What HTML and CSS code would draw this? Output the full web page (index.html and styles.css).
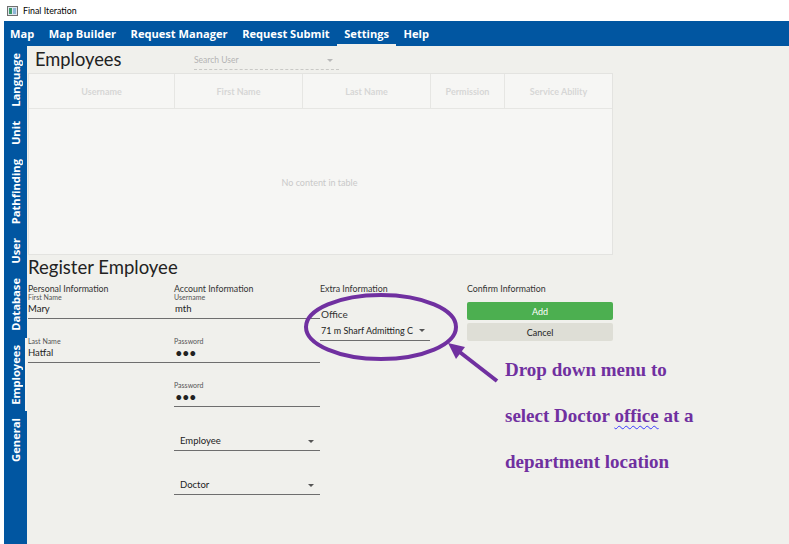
FILE: index.html
```html
<!DOCTYPE html>
<html>
<head>
<meta charset="utf-8">
<title>Final Iteration</title>
<link rel="stylesheet" href="styles.css">
</head>
<body>
<div class="window">
  <div class="titlebar">
    <svg class="appicon" width="11" height="10" viewBox="0 0 11 10">
      <rect x="0.5" y="0.5" width="10" height="9" fill="#dfe6ee" stroke="#707070"/>
      <rect x="2" y="2" width="3" height="6" fill="#3b9a6a"/>
      <rect x="6" y="2" width="3" height="6" fill="#8fb6d8"/>
    </svg>
    <span>Final Iteration</span>
  </div>
  <div class="app">
    <nav class="menubar">
      <span class="menu-item">Map</span>
      <span class="menu-item">Map Builder</span>
      <span class="menu-item">Request Manager</span>
      <span class="menu-item">Request Submit</span>
      <span class="menu-item active">Settings</span>
      <span class="menu-item">Help</span>
    </nav>
    <div class="main">
      <aside class="sidebar">
        <div class="tab"><span>Language</span></div>
        <div class="tab"><span>Unit</span></div>
        <div class="tab"><span>Pathfinding</span></div>
        <div class="tab"><span>User</span></div>
        <div class="tab"><span>Database</span></div>
        <div class="tab active"><span>Employees</span></div>
        <div class="tab"><span>General</span></div>
      </aside>
      <section class="content">
        <div class="emp-header">
          <h1 class="page-title">Employees</h1>
          <div class="search">
            <span>Search User</span>
            <span class="caret small"></span>
          </div>
        </div>
        <div class="table">
          <div class="thead">
            <div class="th">Username</div>
            <div class="th">First Name</div>
            <div class="th">Last Name</div>
            <div class="th">Permission</div>
            <div class="th">Service Ability</div>
          </div>
          <div class="tbody">No content in table</div>
        </div>
        <h2 class="section-title">Register Employee</h2>
        <div class="form">
          <div class="col">
            <div class="col-head">Personal Information</div>
            <div class="field">
              <div class="label">First Name</div>
              <div class="value">Mary</div>
            </div>
            <div class="field">
              <div class="label">Last Name</div>
              <div class="value">Hatfal</div>
            </div>
          </div>
          <div class="col">
            <div class="col-head">Account Information</div>
            <div class="field">
              <div class="label">Username</div>
              <div class="value inset1">mth</div>
            </div>
            <div class="field">
              <div class="label">Password</div>
              <div class="value inset1 dots">&#8226;&#8226;&#8226;</div>
            </div>
            <div class="field">
              <div class="label">Password</div>
              <div class="value inset1 dots">&#8226;&#8226;&#8226;</div>
            </div>
            <div class="field">
              <div class="label"></div>
              <div class="value combo"><span>Employee</span><span class="caret"></span></div>
            </div>
            <div class="field">
              <div class="label"></div>
              <div class="value combo"><span>Doctor</span><span class="caret"></span></div>
            </div>
          </div>
          <div class="col">
            <div class="col-head">Extra Information</div>
            <div class="office">
              <div class="office-label">Office</div>
              <div class="office-combo"><span class="office-text">71 m Sharf Admitting C</span><span class="caret"></span></div>
            </div>
          </div>
          <div class="col">
            <div class="col-head">Confirm Information</div>
            <div class="buttons">
              <div class="btn btn-add">Add</div>
              <div class="btn btn-cancel">Cancel</div>
            </div>
          </div>
        </div>
      </section>
    </div>
  </div>

  <svg class="annotation" width="789" height="544" viewBox="0 0 789 544">
    <ellipse cx="381" cy="327" rx="75" ry="32" fill="none" stroke="#7030a0" stroke-width="4"/>
    <line x1="497" y1="381" x2="459" y2="351.5" stroke="#7030a0" stroke-width="4"/>
    <polygon points="448,343 465,347 456,359" fill="#7030a0"/>
  </svg>
  <div class="note">
    <div>Drop down menu to</div>
    <div>select Doctor <span class="spell">office</span> at a</div>
    <div>department location</div>
  </div>
</div>
</body>
</html>
```

FILE: styles.css
```css
* { box-sizing: border-box; }
html, body { margin: 0; padding: 0; }
body {
  width: 789px;
  height: 544px;
  overflow: hidden;
  background: #ffffff;
  font-family: Lato, "Open Sans", sans-serif;
}
.window {
  position: relative;
  width: 789px;
  height: 544px;
}
.titlebar {
  height: 21px;
  display: flex;
  align-items: center;
  gap: 5px;
  padding-left: 7px;
  font-size: 8.8px;
  color: #000;
}
.appicon { display: block; }
.app {
  margin-left: 4px;
  height: 523px;
  display: flex;
  flex-direction: column;
}
.menubar {
  height: 25px;
  flex: none;
  background: #0156a1;
  display: flex;
}
.menu-item {
  display: flex;
  align-items: center;
  padding: 2px 7.3px 0;
  border-bottom: 2px solid transparent;
  color: #ffffff;
  font-family: "Open Sans", Lato, sans-serif;
  font-weight: 700;
  font-size: 11.1px;
}
.menu-item:first-child { padding-left: 6px; }
.menu-item.active { border-bottom-color: #f0f0ec; }
.main {
  flex: 1;
  display: flex;
  min-height: 0;
}
.sidebar {
  width: 23px;
  flex: none;
  background: #0156a1;
  display: flex;
  flex-direction: column;
}
.tab {
  display: flex;
  justify-content: center;
  padding: 7px 0 7px 2px;
  border-right: 2px solid transparent;
}
.tab.active { border-right-color: #f4f4f2; }
.tab span {
  writing-mode: vertical-rl;
  transform: rotate(180deg);
  color: #ffffff;
  font-family: "Open Sans", Lato, sans-serif;
  font-weight: 700;
  font-size: 11.2px;
  line-height: 13px;
}
.content {
  flex: 1;
  background: #f0f0ec;
  padding-left: 1px;
}
.emp-header {
  height: 27px;
  display: flex;
}
.page-title {
  margin: 0;
  width: 166px;
  padding-left: 7px;
  font-size: 18.3px;
  line-height: 27px;
  font-weight: 400;
  color: #222;
}
.search {
  width: 145px;
  height: 24px;
  display: flex;
  align-items: center;
  justify-content: space-between;
  padding: 5px 6px 0 0;
  border-bottom: 1px dashed #c9c9c6;
  font-size: 8.5px;
  color: #b4b4b4;
}
.caret {
  width: 0;
  height: 0;
  border-left: 3.5px solid transparent;
  border-right: 3.5px solid transparent;
  border-top: 3.5px solid #555;
}
.caret.small { border-top-color: #b8b8b8; }
.table {
  width: 585px;
  height: 182px;
  background: #f6f6f4;
  border: 1px solid #e3e3e0;
  display: flex;
  flex-direction: column;
}
.thead {
  height: 35px;
  flex: none;
  display: grid;
  grid-template-columns: 146px 128px 128px 74px 1fr;
  border-bottom: 1px solid #e6e6e3;
}
.th {
  display: flex;
  align-items: center;
  justify-content: center;
  border-right: 1px solid #e6e6e3;
  color: #d6d6d6;
  font-weight: 700;
  font-size: 9px;
}
.th:last-child { border-right: none; }
.tbody {
  flex: 1;
  display: flex;
  align-items: center;
  justify-content: center;
  padding-top: 1px;
  padding-right: 2px;
  font-size: 9px;
  color: #c9c9c9;
}
.section-title {
  margin: 0;
  height: 29px;
  font-size: 18.5px;
  line-height: 24px;
  font-weight: 400;
  color: #222;
}
.form {
  display: grid;
  grid-template-columns: 146px 146px 147px 146px;
}
.col-head {
  height: 8px;
  font-size: 8.8px;
  line-height: 10px;
  color: #333;
}
.field {
  margin-bottom: 17px;
}
.label {
  height: 8px;
  font-size: 7px;
  line-height: 8px;
  padding-top: 1px;
  color: #555;
}
.value {
  height: 19px;
  line-height: 18px;
  font-size: 9.5px;
  color: #222;
  border-bottom: 1px solid #6e6e6e;
}
.value.inset1 { padding-left: 1px; }
.value.dots {
  font-size: 13px;
  letter-spacing: -0.5px;
  color: #222;
}
.value.combo {
  display: flex;
  align-items: center;
  justify-content: space-between;
  padding: 0 6px 0 6px;
}
.office-label {
  margin-top: 16px;
  padding-left: 1px;
  font-size: 10px;
  line-height: 12px;
  color: #333;
}
.office-combo {
  width: 110px;
  height: 21px;
  display: flex;
  align-items: center;
  padding: 0 5px 0 1px;
  gap: 4px;
  border-bottom: 1px solid #6e6e6e;
  font-size: 9px;
  color: #222;
}
.office-text {
  white-space: nowrap;
  flex: 1;
}
.buttons {
  margin-top: 10px;
  display: flex;
  flex-direction: column;
  gap: 3px;
}
.btn {
  height: 18px;
  display: flex;
  align-items: center;
  justify-content: center;
  border-radius: 2px;
  font-size: 9px;
}
.btn-add { background: #4caf50; color: #ffffff; }
.btn-cancel { background: #deded6; color: #222; }
.annotation {
  position: absolute;
  left: 0;
  top: 0;
  pointer-events: none;
}
.note {
  position: absolute;
  left: 505px;
  top: 347px;
  font-family: "Liberation Serif", "Times New Roman", serif;
  font-weight: 700;
  font-size: 19px;
  line-height: 46px;
  color: #7030a0;
  white-space: nowrap;
}
.spell {
  text-decoration: underline wavy #3a3aff;
  text-decoration-thickness: 1px;
  text-underline-offset: 3px;
}
```
